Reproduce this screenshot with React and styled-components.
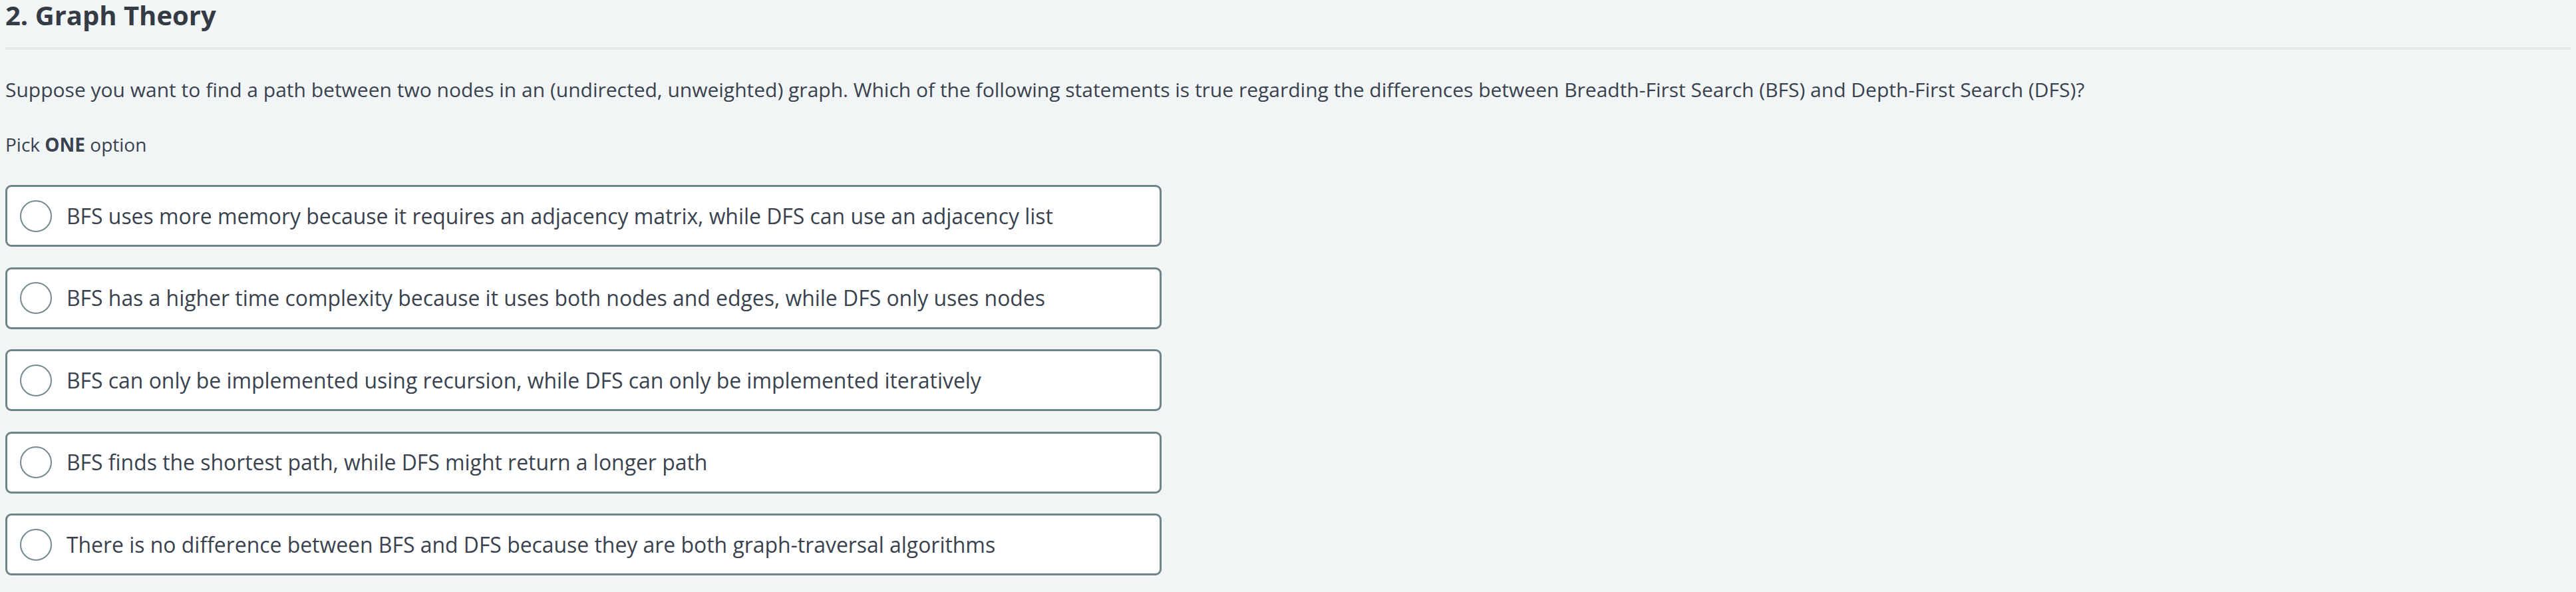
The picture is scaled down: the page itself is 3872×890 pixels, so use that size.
import React from 'react';
import styled, { createGlobalStyle } from 'styled-components';

const GlobalStyle = createGlobalStyle`
  html, body {
    margin: 0;
    padding: 0;
    background: #f2f5f6;
  }
  body {
    font-family: "Open Sans", "Liberation Sans", sans-serif;
    color: #39424e;
  }
`;

const Page = styled.div`
  padding: 0 8px;
`;

const Header = styled.div`
  padding-bottom: 26px;
  border-bottom: 4px solid #e6eaeb;
`;

const Title = styled.h2`
  margin: 0;
  font-size: 40px;
  line-height: 45px;
  font-weight: 700;
  color: #353b45;
`;

const Text = styled.p`
  margin: 0;
  font-size: ${({ $size }) => $size}px;
  line-height: 40px;
  margin-top: ${({ $top }) => $top}px;
`;

const Options = styled.div`
  display: flex;
  flex-direction: column;
  gap: 30.5px;
  margin-top: 41px;
  width: 1738px;
`;

const Option = styled.label`
  box-sizing: border-box;
  height: 93px;
  display: flex;
  align-items: center;
  gap: 22px;
  padding-left: 19px;
  background: #ffffff;
  border: 3px solid #6e848a;
  border-radius: 9px;
  font-size: 31.9px;
  line-height: 44px;
  cursor: pointer;
`;

const Radio = styled.span`
  box-sizing: border-box;
  flex: none;
  width: 48px;
  height: 48px;
  border-radius: 50%;
  border: 2px solid #738a90;
  background: #fff;
`;

const options = [
  'BFS uses more memory because it requires an adjacency matrix, while DFS can use an adjacency list',
  'BFS has a higher time complexity because it uses both nodes and edges, while DFS only uses nodes',
  'BFS can only be implemented using recursion, while DFS can only be implemented iteratively',
  'BFS finds the shortest path, while DFS might return a longer path',
  'There is no difference between BFS and DFS because they are both graph-traversal algorithms',
];

export default function App() {
  return (
    <>
      <GlobalStyle />
      <Page>
        <Header>
          <Title>2. Graph Theory</Title>
        </Header>
        <Text $top={40} $size={30}>
          Suppose you want to find a path between two nodes in an (undirected, unweighted) graph. Which of the following statements is true regarding the differences between Breadth-First Search (BFS) and Depth-First Search (DFS)?
        </Text>
        <Text $top={42} $size={28}>
          Pick <b>ONE</b> option
        </Text>
        <Options>
          {options.map((o) => (
            <Option key={o}>
              <Radio />
              {o}
            </Option>
          ))}
        </Options>
      </Page>
    </>
  );
}
